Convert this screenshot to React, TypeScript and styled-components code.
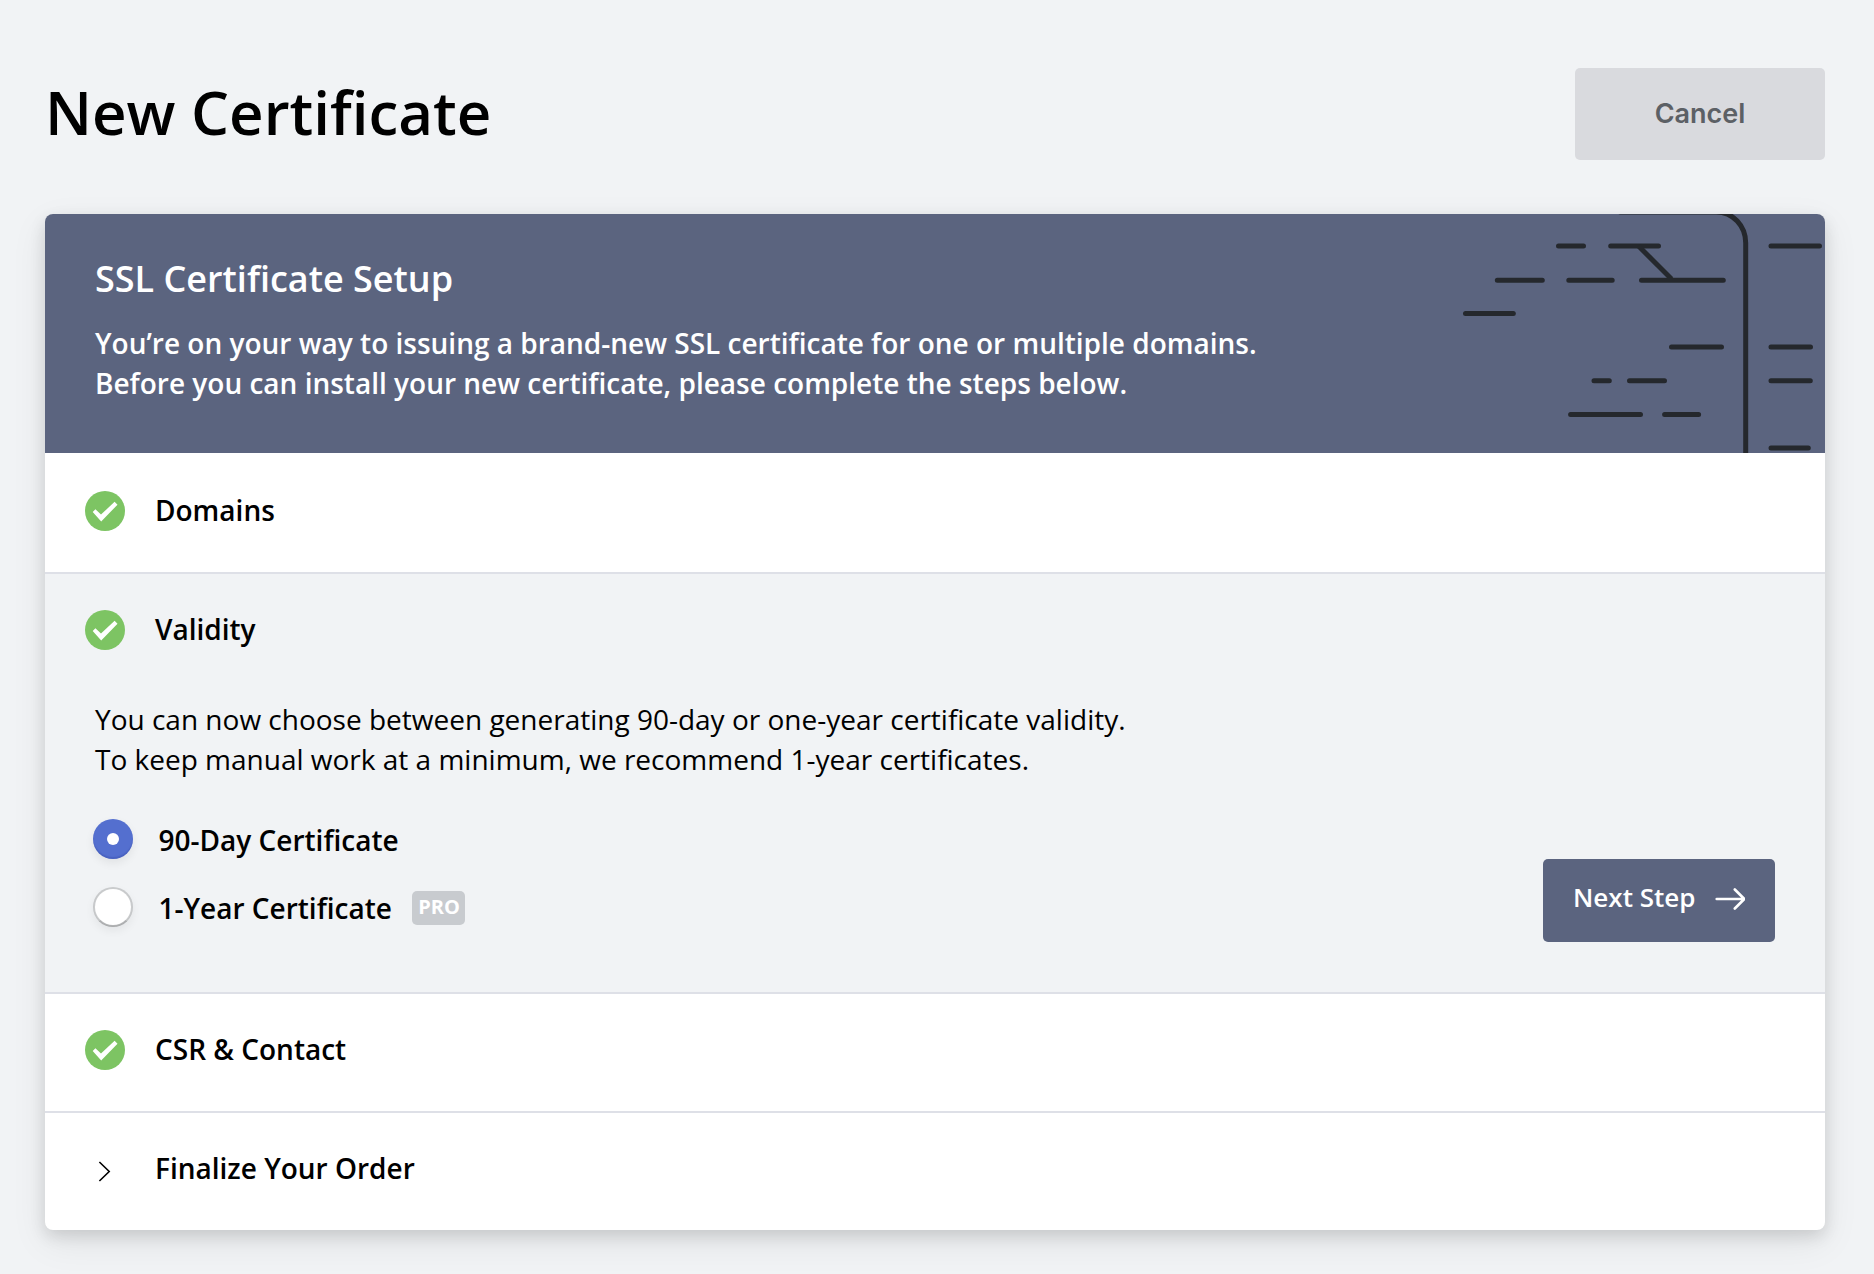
import React, { useState } from "react";
import styled, { createGlobalStyle } from "styled-components";

const GlobalStyle = createGlobalStyle`
  *, *::before, *::after { box-sizing: border-box; }
  body {
    margin: 0;
    background: #f1f3f5;
    color: #000;
    font-family: "Open Sans", "Noto Sans", sans-serif;
    font-variant-ligatures: none;
  }
`;

const Page = styled.main`
  min-height: 1274px;
  padding: 68px 49px 44px 45px;
`;

const TopBar = styled.header`
  display: flex;
  align-items: center;
  justify-content: space-between;
  height: 92px;
  margin-bottom: 54px;
`;

const PageTitle = styled.h1`
  margin: 0 0 4px;
  font-size: 60px;
  line-height: 80px;
  font-weight: 600;
`;

const CancelButton = styled.button`
  width: 250px;
  height: 92px;
  padding: 0 0 1px;
  border: 0;
  border-radius: 5px;
  background: #d9dade;
  color: #5c6065;
  font: 620 27px "Inter", sans-serif;
`;

const Card = styled.section`
  border-radius: 8px;
  background: #fff;
  box-shadow: 0 6px 16px rgba(0, 0, 0, 0.12), 0 12px 36px rgba(0, 0, 0, 0.08);
`;

const Banner = styled.div`
  display: flex;
  justify-content: space-between;
  height: 239px;
  padding-left: 50px;
  border-radius: 8px 8px 0 0;
  overflow: hidden;
  background: #5b647f;
  color: #fff;
`;

const BannerCopy = styled.div`
  display: flex;
  flex-direction: column;
  gap: 19px;
  padding-top: 40px;
`;

const BannerTitle = styled.h2`
  margin: 0;
  font-size: 36px;
  line-height: 50px;
  font-weight: 600;
`;

const BannerText = styled.p`
  margin: 0;
  font-size: 28px;
  line-height: 40px;
  font-weight: 600;
`;

const Artwork = styled.svg`
  flex: none;
  width: 385px;
  height: 239px;
  fill: none;
  stroke: #25282d;
  stroke-width: 5;
  stroke-linecap: round;
`;

const Step = styled.section<{ $active?: boolean; $first?: boolean }>`
  border-top: 2px solid ${(p) => (p.$first ? "#fff" : "#dee0e7")};
  background: ${(p) => (p.$active ? "#f1f3f5" : "transparent")};
`;

const StepHeader = styled.div`
  display: flex;
  align-items: center;
  gap: 30px;
  height: 117px;
  padding: 0 40px 5px;
`;

const StepTitle = styled.h3`
  margin: 0 0 2px;
  font-size: 28px;
  line-height: 40px;
  font-weight: 600;
`;

const StepIcon = styled.svg`
  flex: none;
  width: 40px;
  height: 40px;
`;

const StepBody = styled.div`
  height: 301px;
  padding: 8px 50px 50px;
`;

const Intro = styled.p`
  margin: 0 0 40px;
  font-size: 28px;
  line-height: 40px;
`;

const FormRow = styled.div`
  display: flex;
  align-items: flex-start;
  justify-content: space-between;
`;

const Options = styled.div`
  display: flex;
  flex-direction: column;
  gap: 28px;
`;

const Option = styled.label`
  display: flex;
  align-items: center;
  height: 40px;
  margin-left: -2px;
`;

const Radio = styled.input`
  appearance: none;
  display: grid;
  place-items: center;
  flex: none;
  width: 40px;
  height: 40px;
  margin: 0 25.5px 0 0;
  border: 2px solid rgba(0, 0, 0, 0.16);
  border-bottom-color: rgba(0, 0, 0, 0.26);
  border-radius: 50%;
  background: #fff;
  background-clip: padding-box;
  box-shadow: 0 4px 10px rgba(0, 0, 0, 0.06);

  &:checked {
    border: 0;
    background: #546fcf;
    box-shadow: inset 0 -2px 1px rgba(40, 60, 150, 0.25), 0 4px 10px rgba(0, 0, 0, 0.07);
  }

  &:checked::before {
    content: "";
    width: 12px;
    height: 12px;
    border-radius: 50%;
    background: #fff;
  }
`;

const OptionText = styled.span`
  padding-top: 2px;
  font-size: 28px;
  line-height: 38px;
  font-weight: 600;
`;

const ProBadge = styled.span`
  width: 53px;
  height: 34px;
  margin: 2px 0 0 20.5px;
  border-radius: 5px;
  background: #c8cbcf;
  color: #fff;
  font-size: 20px;
  line-height: 32px;
  font-weight: 700;
  text-align: center;
`;

const NextButton = styled.button`
  display: flex;
  align-items: center;
  justify-content: space-between;
  width: 232px;
  height: 83px;
  margin-top: 40px;
  padding: 0 30px 7px;
  border: 0;
  border-radius: 5px;
  background: #5b647f;
  color: #fff;
  font: 600 26px/36px "Open Sans", "Noto Sans", sans-serif;
`;

const ArrowIcon = styled.svg`
  width: 30px;
  height: 24px;
  margin-top: 3px;
`;

function BannerArtwork() {
  return (
    <Artwork viewBox="0 0 385 239" aria-hidden="true">
      <path d="M180 -2.1H276C293 -2.1 305.7 12 305.7 29V242" />
      <path d="M118.5 32H143.5M170.7 32H218.5M331 32H379.5" />
      <path d="M198.5 32L231.5 65" strokeLinecap="butt" />
      <path d="M57.3 66.3H102.3M128.8 66.3H172.2M201.5 66.3H283.3" />
      <path d="M25.5 99.4H73.3" />
      <path d="M231.5 133H281.5M331 133H370.5" />
      <path d="M154 166.7H169.3M189.5 166.7H224.5M331 166.7H370.3" />
      <path d="M130.6 200.4H200.5M224.6 200.4H258.6" />
      <path d="M331 234.1H368.3" />
    </Artwork>
  );
}

function DoneIcon() {
  return (
    <StepIcon viewBox="0 0 40 40" aria-hidden="true">
      <circle cx="20" cy="20" r="20" fill="#7dc463" />
      <path d="M7.7 20.9L10.4 18.2L16 23.6L29.6 10.8L32.5 13.7L16.2 30.4Z" fill="#fff" />
    </StepIcon>
  );
}

function PendingIcon() {
  return (
    <StepIcon viewBox="0 0 40 40" aria-hidden="true">
      <path d="M14.4 13L24.2 22.5L14.4 32" fill="none" stroke="#000" strokeWidth="1.6" />
    </StepIcon>
  );
}

interface StepProps {
  title: string;
  done?: boolean;
  active?: boolean;
  first?: boolean;
  children?: React.ReactNode;
}

function SetupStep({ title, done, active, first, children }: StepProps) {
  return (
    <Step $active={active} $first={first}>
      <StepHeader>
        {done ? <DoneIcon /> : <PendingIcon />}
        <StepTitle>{title}</StepTitle>
      </StepHeader>
      {children && <StepBody>{children}</StepBody>}
    </Step>
  );
}

export default function App() {
  const [validity, setValidity] = useState("90-day");

  return (
    <>
      <GlobalStyle />
      <Page>
        <TopBar>
          <PageTitle>New Certificate</PageTitle>
          <CancelButton type="button">Cancel</CancelButton>
        </TopBar>
        <Card>
          <Banner>
            <BannerCopy>
              <BannerTitle>SSL Certificate Setup</BannerTitle>
              <BannerText>
                You’re on your way to issuing a brand-new SSL certificate for one or multiple domains.
                <br />
                Before you can install your new certificate, please complete the steps below.
              </BannerText>
            </BannerCopy>
            <BannerArtwork />
          </Banner>
          <SetupStep title="Domains" done first />
          <SetupStep title="Validity" done active>
            <Intro>
              You can now choose between generating 90-day or one-year certificate validity.
              <br />
              To keep manual work at a minimum, we recommend 1-year certificates.
            </Intro>
            <FormRow>
              <Options>
                <Option>
                  <Radio
                    type="radio"
                    name="validity"
                    checked={validity === "90-day"}
                    onChange={() => setValidity("90-day")}
                  />
                  <OptionText>90-Day Certificate</OptionText>
                </Option>
                <Option>
                  <Radio
                    type="radio"
                    name="validity"
                    checked={validity === "1-year"}
                    onChange={() => setValidity("1-year")}
                  />
                  <OptionText>1-Year Certificate</OptionText>
                  <ProBadge>PRO</ProBadge>
                </Option>
              </Options>
              <NextButton type="button">
                Next Step
                <ArrowIcon viewBox="0 0 30 24" aria-hidden="true">
                  <path
                    d="M1.7 12H29.5M19.8 2.5L29.3 12L19.8 21.5"
                    fill="none"
                    stroke="#fff"
                    strokeWidth="2.6"
                    strokeLinecap="round"
                    strokeLinejoin="round"
                  />
                </ArrowIcon>
              </NextButton>
            </FormRow>
          </SetupStep>
          <SetupStep title="CSR & Contact" done />
          <SetupStep title="Finalize Your Order" />
        </Card>
      </Page>
    </>
  );
}
